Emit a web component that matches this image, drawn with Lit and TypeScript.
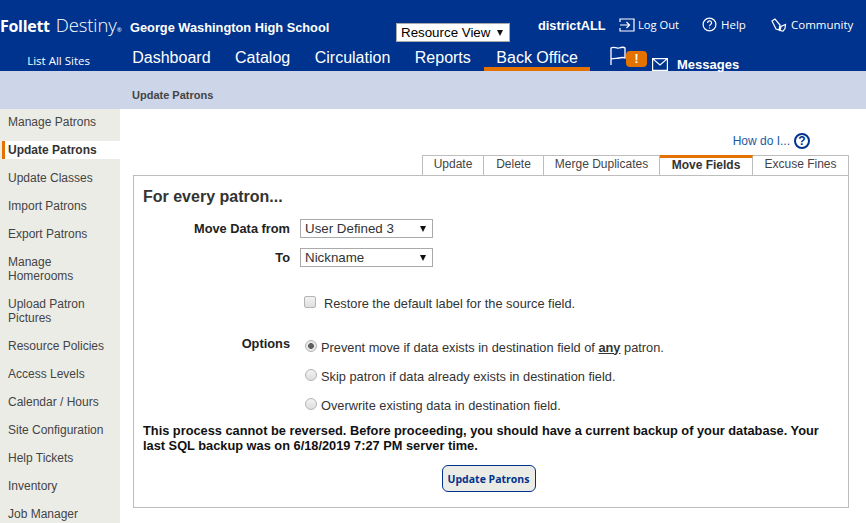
import { LitElement, html, css } from "lit";
import { customElement } from "lit/decorators.js";

const side = [
  "Manage Patrons", "Update Patrons", "Update Classes", "Import Patrons", "Export Patrons",
  "Manage Homerooms", "Upload Patron Pictures", "Resource Policies", "Access Levels",
  "Calendar / Hours", "Site Configuration", "Help Tickets", "Inventory", "Job Manager",
];
const nav = ["Dashboard", "Catalog", "Circulation", "Reports", "Back Office"];
const tabs = ["Update", "Delete", "Merge Duplicates", "Move Fields", "Excuse Fines"];
const tabWidths = [62, 60, 116, 93, 96];

@customElement("app-root")
export class AppRoot extends LitElement {
  static styles = css`
    :host { display: block; width: 866px; height: 523px; overflow: hidden; background: #fff;
      font-family: "Liberation Sans", Arial, sans-serif; color: #333; }
    * { box-sizing: border-box; }
    .hdr { height: 71px; background: #00338d; color: #fff; display: grid; grid-template-columns: 120px 1fr; grid-template-rows: 45px 26px; }
    .logo { display: flex; align-items: baseline; padding-top: 12px; font-family: "Open Sans", sans-serif; white-space: nowrap; }
    .logo b { font-size: 16px; font-weight: 700; letter-spacing: -0.3px; }
    .logo span { font-size: 18.5px; font-weight: 300; margin-left: 6px; letter-spacing: -0.1px; }
    .logo sup { font-size: 6px; line-height: 0; vertical-align: 9px; }
    .top { display: flex; align-items: flex-start; position: relative; }
    .school { font-size: 12.8px; font-weight: 700; margin: 20px 0 0 10px; width: 266px; white-space: nowrap; }
    .sel { position: relative; display: block; }
    .sel select { appearance: none; display: block; margin: 0; border-radius: 0; background: #fff; font: 13.33px "Liberation Sans", Arial, sans-serif; color: #000; }
    .sel::after { content: ""; position: absolute; top: 50%; margin-top: -3px; border-style: solid; border-color: #111 transparent transparent; }
    .rv { margin-top: 23px; }
    .rv select { width: 114px; height: 19px; padding: 0 0 0 4px; border: 1px solid #aaa; }
    .rv::after { right: 7px; border-width: 6px 3.5px 0; }
    .dist { font-size: 12.8px; font-weight: 700; margin: 18px 0 0 28px; width: 81px; white-space: nowrap; }
    .lk { display: flex; align-items: center; font-family: "Open Sans", sans-serif; font-size: 11.5px; margin-top: 17px; gap: 4px; white-space: nowrap; }
    .lk svg { display: block; fill: none; stroke: #fff; stroke-width: 1.2; }
    .lo { width: 83px; gap: 3px; font-size: 11.2px; }
    .he { width: 69px; }
    .list { font-family: "Open Sans", sans-serif; font-size: 11.5px; text-align: right; padding: 8px 30px 0 0; white-space: nowrap; }
    .nav { display: flex; height: 26px; position: relative; }
    .nav a { font-size: 16px; padding: 4px 12.25px 0; height: 26px; white-space: nowrap; line-height: 18px; }
    .nav a.on { border-bottom: 4px solid #e37200; width: 106px; margin-left: 1px; }
    .flag { position: absolute; left: 490px; top: 1px; }
    .badge { position: absolute; left: 506px; top: 6px; width: 21px; height: 16px; background: #e37200; border-radius: 4px; color: #fff; font-size: 12px; font-weight: 700; text-align: center; line-height: 16px; }
    .msg { position: absolute; left: 532px; top: 13px; }
    .msgt { position: absolute; left: 557px; top: 12px; font-size: 13px; font-weight: 700; line-height: 15px; }
    .sub { height: 38px; background: #cdd5e8; padding: 18px 0 0 132px; font-size: 11px; font-weight: 700; color: #444; line-height: 13px; }
    .body { display: grid; grid-template-columns: 120px 1fr; height: 414px; }
    .side { background: #ecece7; padding-top: 6px; font-size: 12px; color: #444; overflow: hidden; }
    .side div { padding: 0 14px 0 8px; line-height: 14px; margin-bottom: 14px; }
    .side div.on { background: #fff; color: #333; font-weight: 700; margin: -2px 0 12px 2px; padding: 2px 0 2px 3px; width: 118px; height: 18px; border-left: 3px solid #e37200; }
    .main { padding: 22px 17px 0 13px; }
    .how { display: flex; justify-content: flex-end; align-items: center; gap: 4px; font-size: 12px; color: #1a5aa0; height: 20px; padding-right: 39px; margin-bottom: 4px; }
    .how i { display: block; width: 16px; height: 16px; border: 2px solid #00338d; border-radius: 50%; color: #00338d; font: 700 12px/12px "Liberation Sans", sans-serif; text-align: center; }
    .tabs { display: flex; justify-content: flex-end; height: 21px; position: relative; margin-bottom: -1px; }
    .tabs span { display: block; height: 21px; border: 1px solid #bdbdbd; border-left-width: 0; font-size: 12px; line-height: 17px; text-align: center; color: #444; }
    .tabs span:first-child { border-left-width: 1px; }
    .tabs span.on { font-weight: 700; color: #333; border-top: 3px solid #e37200; line-height: 14px; }
    .panel { border: 1px solid #bdbdbd; height: 333px; padding: 0 9px; }
    h2 { margin: 0; padding-top: 12px; font-size: 16px; line-height: 18px; color: #333; }
    .row { display: grid; grid-template-columns: 147px 1fr; column-gap: 10px; align-items: center; font-size: 12.8px; color: #333; }
    .lab { text-align: right; font-weight: 700; font-size: 12.8px; color: #222; }
    .f1 { margin-top: 13px; height: 19px; }
    .f2 { margin-top: 10px; height: 19px; }
    .fs select { width: 133px; height: 19px; padding: 0 0 0 4px; border: 1px solid #aaa; color: #333; }
    .fs::after { left: 120px; border-width: 6px 3px 0; }
    .opt { display: flex; align-items: center; height: 16px; }
    input { appearance: none; margin: 0; display: block; flex: none; width: 12px; height: 12px; border: 1px solid #b4b4b4; background: linear-gradient(#f2f2f2, #dedede); }
    input[type=checkbox] { margin: 0 8px 3px 4px; border-radius: 2px; }
    input[type=radio] { margin: 0 4px 3px 5px; border-radius: 50%; }
    input[type=radio]:checked { background: radial-gradient(circle, #5f5f5f 0 2.6px, #e9e9e9 3.2px); }
    .r0 { margin-top: 28px; }
    .r1 { margin-top: 28px; align-items: start; }
    .r1 .lab { margin-top: -3px; }
    .r2 { margin-top: 13px; }
    .r3 { margin-top: 13px; }
    .warn { margin: 10px 0 0; font-size: 12.8px; font-weight: 700; line-height: 15px; color: #111; }
    .btnw { display: flex; justify-content: center; margin-top: 12px; padding-right: 5px; }
    button { display: block; width: 94px; height: 27px; padding: 0; background: #ecece7; border: 1px solid #00338d; border-radius: 6px; color: #00338d; font: 700 10.5px "Open Sans", sans-serif; }
  `;

  render() {
    return html`
      <div class="hdr">
        <div class="logo"><b>Follett</b><span>Destiny</span><sup>®</sup></div>
        <div class="top">
          <div class="school">George Washington High School</div>
          <label class="sel rv"><select><option>Resource View</option></select></label>
          <div class="dist">districtALL</div>
          <div class="lk lo">
            <svg width="16" height="14" viewBox="0 0 16 14"><path d="M1 4V1h14v12H1v-3M1 7h9M7.5 4l3 3-3 3"/></svg>
            <span>Log Out</span>
          </div>
          <div class="lk he">
            <svg width="15" height="15" viewBox="0 0 15 15"><circle cx="7.5" cy="7.5" r="6.4"/><path d="M5.6 6a2 2 0 1 1 3 1.6c-.7.4-1 .8-1 1.6M7.5 10.4v1.2"/></svg>
            <span>Help</span>
          </div>
          <div class="lk">
            <svg width="16" height="14" viewBox="0 0 16 14"><path d="M1 3l3-2 5 6-1 5-3-1zM9 12.500l1-4 4.500-2-.5 4-2 2.500z"/></svg>
            <span>Community</span>
          </div>
        </div>
        <div class="list">List All Sites</div>
        <div class="nav">
          ${nav.map((n) => html`<a class=${n === "Back Office" ? "on" : ""}>${n}</a>`)}
          <svg class="flag" width="18" height="20" viewBox="0 0 18 20" fill="none" stroke="#fff" stroke-width="1.3"><path d="M1 19V2C4 0 6 3 9 2s5-1 6 0v10c-2-1-4-.5-6 0s-5 0-8 1"/></svg>
          <div class="badge">!</div>
          <svg class="msg" width="16" height="13" viewBox="0 0 16 13" fill="none" stroke="#fff" stroke-width="1.2"><path d="M.6.6h14.8v11.8H.6zM.6.6 8 7l7.400-6.400"/></svg>
          <div class="msgt">Messages</div>
        </div>
      </div>
      <div class="sub">Update Patrons</div>
      <div class="body">
        <div class="side">${side.map((s) => html`<div class=${s === "Update Patrons" ? "on" : ""}>${s}</div>`)}</div>
        <div class="main">
          <div class="how">How do I... <i>?</i></div>
          <div class="tabs">
            ${tabs.map((t, i) => html`<span class=${t === "Move Fields" ? "on" : ""} style="width:${tabWidths[i]}px">${t}</span>`)}
          </div>
          <div class="panel">
            <h2>For every patron...</h2>
            <div class="row f1"><div class="lab">Move Data from</div><label class="sel fs"><select><option>User Defined 3</option></select></label></div>
            <div class="row f2"><div class="lab">To</div><label class="sel fs"><select><option>Nickname</option></select></label></div>
            <div class="row r0"><div></div><div class="opt"><input type="checkbox" /><span>Restore the default label for the source field.</span></div></div>
            <div class="row r1"><div class="lab">Options</div><div class="opt"><input type="radio" name="o" checked /><span>Prevent move if data exists in destination field of <b><u>any</u></b> patron.</span></div></div>
            <div class="row r2"><div></div><div class="opt"><input type="radio" name="o" /><span>Skip patron if data already exists in destination field.</span></div></div>
            <div class="row r3"><div></div><div class="opt"><input type="radio" name="o" /><span>Overwrite existing data in destination field.</span></div></div>
            <p class="warn">This process cannot be reversed. Before proceeding, you should have a current backup of your database. Your last SQL backup was on 6/18/2019 7:27 PM server time.</p>
            <div class="btnw"><button>Update Patrons</button></div>
          </div>
        </div>
      </div>
    `;
  }
}
